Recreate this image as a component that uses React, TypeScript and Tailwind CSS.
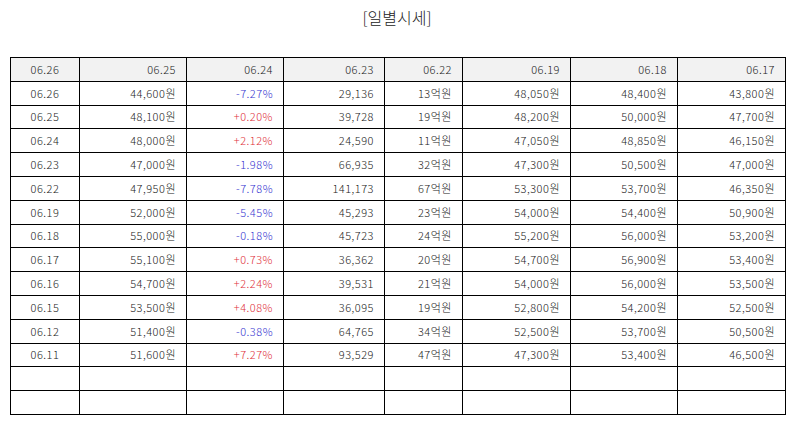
import React from "react";

type Row = [string, string, string, string, string, string, string, string];

const header: string[] = ["06.26", "06.25", "06.24", "06.23", "06.22", "06.19", "06.18", "06.17"];

const rows: Row[] = [
  ["06.26", "44,600원", "-7.27%", "29,136", "13억원", "48,050원", "48,400원", "43,800원"],
  ["06.25", "48,100원", "+0.20%", "39,728", "19억원", "48,200원", "50,000원", "47,700원"],
  ["06.24", "48,000원", "+2.12%", "24,590", "11억원", "47,050원", "48,850원", "46,150원"],
  ["06.23", "47,000원", "-1.98%", "66,935", "32억원", "47,300원", "50,500원", "47,000원"],
  ["06.22", "47,950원", "-7.78%", "141,173", "67억원", "53,300원", "53,700원", "46,350원"],
  ["06.19", "52,000원", "-5.45%", "45,293", "23억원", "54,000원", "54,400원", "50,900원"],
  ["06.18", "55,000원", "-0.18%", "45,723", "24억원", "55,200원", "56,000원", "53,200원"],
  ["06.17", "55,100원", "+0.73%", "36,362", "20억원", "54,700원", "56,900원", "53,400원"],
  ["06.16", "54,700원", "+2.24%", "39,531", "21억원", "54,000원", "56,000원", "53,500원"],
  ["06.15", "53,500원", "+4.08%", "36,095", "19억원", "52,800원", "54,200원", "52,500원"],
  ["06.12", "51,400원", "-0.38%", "64,765", "34억원", "52,500원", "53,700원", "50,500원"],
  ["06.11", "51,600원", "+7.27%", "93,529", "47억원", "47,300원", "53,400원", "46,500원"],
];

const widths = ["w-[69px]", "w-[107px]", "w-[97px]", "w-[101px]", "w-[78px]", "w-[108px]", "w-[107px]", "w-[108px]"];

const font = { fontFamily: '"Noto Sans CJK KR", "Noto Sans", sans-serif' };

export default function App() {
  return (
    <div className="w-[794px] h-[425px] bg-white px-[10px] pt-[6px]" style={font}>
      <h1 className="text-center text-[16px] leading-[22px] text-[#222] font-light">[일별시세]</h1>
      <table className="mt-[29px] w-[775px] border-collapse table-fixed text-[11px] font-light text-[#222] tracking-[0.5px]">
        <colgroup>
          {widths.map((w, i) => (
            <col key={i} className={w} />
          ))}
        </colgroup>
        <thead>
          <tr className="bg-[#f2f2f2]">
            {header.map((h, i) => (
              <td
                key={i}
                className={`h-[23.8px] p-0 border border-black leading-none ${i === 0 ? "text-center" : "text-right pr-[10px]"}`}
              >
                {h}
              </td>
            ))}
          </tr>
        </thead>
        <tbody>
          {rows.map((r, ri) => (
            <tr key={ri}>
              {r.map((c, i) => {
                let color = "";
                if (i === 2) color = c.startsWith("-") ? "text-[#3535d0]" : "text-[#e0303a]";
                return (
                  <td
                    key={i}
                    className={`h-[23.8px] p-0 border border-black leading-none ${i === 0 ? "text-center" : "text-right pr-[10px]"} ${color}`}
                  >
                    {c}
                  </td>
                );
              })}
            </tr>
          ))}
          {[0, 1].map((k) => (
            <tr key={`e${k}`}>
              {header.map((_, i) => (
                <td key={i} className="h-[23.8px] p-0 border border-black">
                  &nbsp;
                </td>
              ))}
            </tr>
          ))}
        </tbody>
      </table>
    </div>
  );
}
